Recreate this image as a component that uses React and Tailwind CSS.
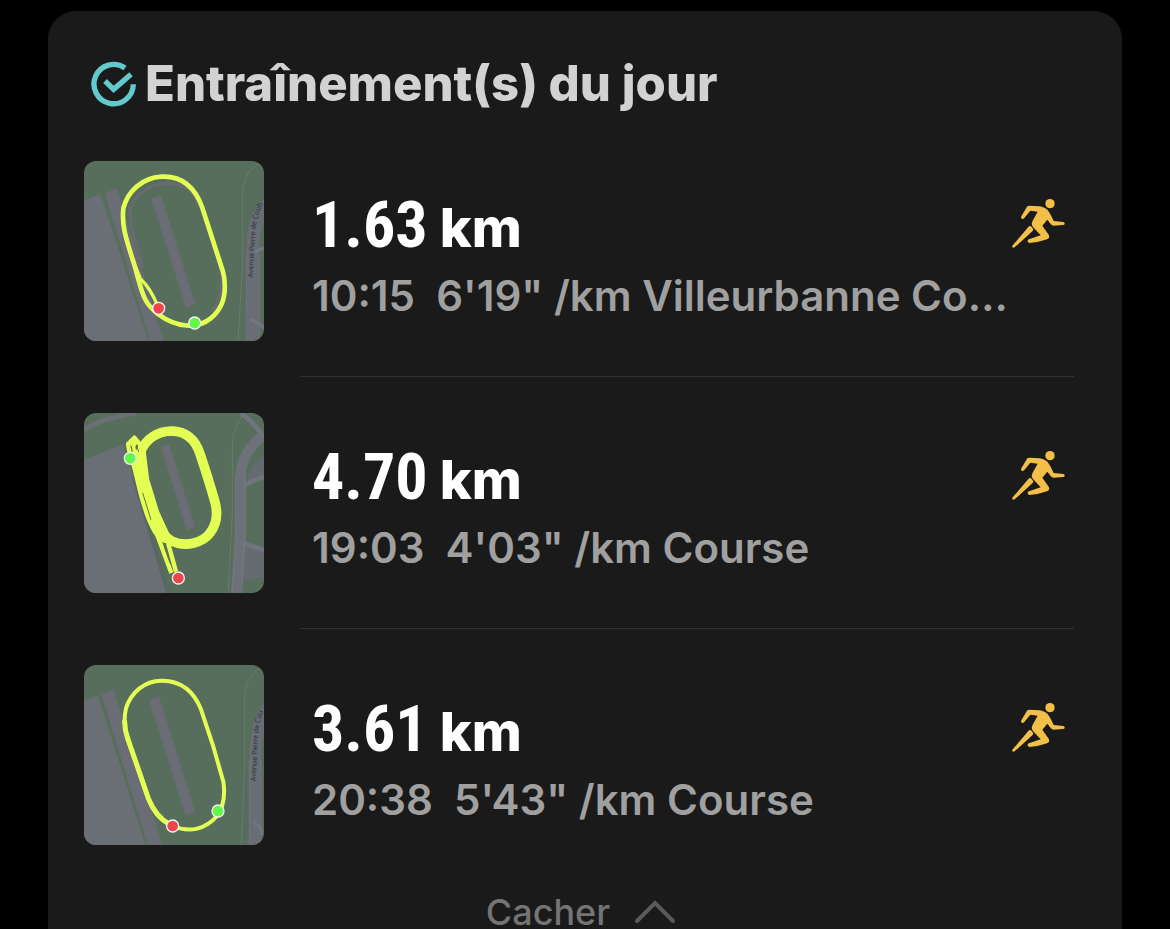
import React from "react";

function Marker({ x, y, color }) {
  return <circle cx={x} cy={y} r="18" fill={color} stroke="#f4f4f4" strokeWidth="4" />;
}

function StreetName({ id, d, children }) {
  return (
    <>
      <path id={id} d={d} fill="none" />
      <text fill="#2f3338" fontSize="21" fontFamily="Noto Sans, sans-serif">
        <textPath href={`#${id}`}>{children}</textPath>
      </text>
    </>
  );
}

function MapWarmup() {
  return (
    <svg viewBox="12 18 540 540" className="size-full" role="img" aria-label="Parcours 1.63 km">
      <rect x="12" y="18" width="540" height="540" fill="#586e5c" />
      <path d="M12 135 L62 118 L205 558 H12Z" fill="#696f74" />
      <path d="M74 113 L110 101 L252 558 H210Z" fill="#6a6d75" />
      <path d="M214 130 L243 121 L346 448 L318 458Z" fill="#6a6c76" />
      <path d="M152 160 C170 105 235 75 290 88 C335 98 360 145 370 180 L420 340 C430 380 425 430 395 470 M150 150 C145 185 155 230 190 340" fill="none" stroke="#666c70" strokeWidth="9" />
      <path d="M538 25 C505 45 488 75 488 120 V320 L474 558" fill="none" stroke="#819084" strokeWidth="2" strokeDasharray="5 3" />
      <path d="M566 145 C530 180 520 220 518 280 V558" fill="none" stroke="#696d76" strokeWidth="38" />
      <path d="M552 278 L520 292 M510 495 Q535 500 552 520" fill="none" stroke="#747780" strokeWidth="10" />
      <path d="M499 558 V300 M539 558 V300" fill="none" stroke="#777a82" strokeWidth="2" />
      <StreetName id="street-warmup" d="M518 368 L524 260 C526 215 530 180 560 120">Avenue Pierre de Coub</StreetName>
      <path d="M235 478 C290 518 352 523 392 490 C424 464 437 430 434 385 Q434 368 428 347 L367 158 C342 88 300 62 244 65 C188 68 143 108 130 160 C125 207 134 240 161 323 C188 415 187 440 235 478" fill="none" stroke="#e4ff54" strokeWidth="14" />
      <path d="M160 320 L181 371 C205 393 217 414 232 450" fill="none" stroke="#e4ff54" strokeWidth="10" />
      <Marker x={236} y={460} color="#ee444e" />
      <Marker x={344} y={504} color="#61f947" />
    </svg>
  );
}

function MapIntervals() {
  return (
    <svg viewBox="12 18 540 540" className="size-full" role="img" aria-label="Parcours 4.70 km">
      <rect x="12" y="18" width="540" height="540" fill="#586e5c" />
      <path d="M12 158 L128 112 L170 240 L268 558 H12Z" fill="#696f74" />
      <path d="M160 210 L264 558" stroke="#596760" strokeWidth="10" />
      <path d="M12 70 Q50 38 170 18" fill="none" stroke="#6b7074" strokeWidth="14" />
      <path d="M242 118 L267 110 L346 360 L320 370Z" fill="#6a6c76" />
      <path d="M552 145 Q510 180 495 235 L552 208Z M480 405 L552 430 V510 L476 524Z" fill="#666b72" />
      <path d="M552 85 C510 110 487 155 482 200 V400 L468 558" fill="none" stroke="#6d7179" strokeWidth="31" />
      <path d="M482 18 Q522 45 552 92 M490 235 L552 208 M482 405 L552 430" fill="none" stroke="#70747d" strokeWidth="14" />
      <path d="M495 205 V370 L485 558 M466 205 V390 L456 558" fill="none" stroke="#7a7d85" strokeWidth="2" />
      <path d="M492 20 Q456 65 457 120 V320 L444 558" fill="none" stroke="#819084" strokeWidth="2" strokeDasharray="5 3" />
      <path d="M182 135 C196 95 235 72 275 72 C318 73 345 95 360 140 C375 185 388 225 403 278 C415 318 412 350 390 378 C368 408 315 422 275 402 C242 384 228 345 212 305 L186 205 C180 180 176 160 182 135Z" fill="none" stroke="#e4ff54" strokeWidth="29" strokeLinejoin="round" />
      <path d="M182 140 L192 220 L222 318 L256 392" fill="none" stroke="#e4ff54" strokeWidth="32" strokeLinecap="round" strokeLinejoin="round" />
      <path d="M183 116 L163 92 L144 111 L149 140 L164 185 L182 260 C195 305 207 350 232 385 L274 498 M170 112 L157 106 L162 132 L174 175 M262 400 L288 494" fill="none" stroke="#e4ff54" strokeWidth="13" strokeLinejoin="round" />
      <path d="M188 258 L213 338 M253 420 L270 468 M153 116 L157 134 M170 115 L176 135" fill="none" stroke="#66733e" strokeWidth="3" />
      <Marker x={151} y={154} color="#61f947" />
      <Marker x={295} y={513} color="#ee444e" />
    </svg>
  );
}

function MapCooldown() {
  return (
    <svg viewBox="12 15 540 540" className="size-full" role="img" aria-label="Parcours 3.61 km">
      <rect x="12" y="15" width="540" height="540" fill="#586e5c" />
      <path d="M12 122 L54 107 L196 555 H12Z" fill="#696f74" />
      <path d="M64 104 L101 90 L247 555 H204Z" fill="#6a6d75" />
      <path d="M207 120 L237 109 L346 456 L317 467Z" fill="#6a6c76" />
      <path d="M535 28 C507 50 494 75 494 120 V320 L484 555" fill="none" stroke="#819084" strokeWidth="2" strokeDasharray="5 3" />
      <path d="M574 130 C538 175 528 225 526 290 V555" fill="none" stroke="#696d76" strokeWidth="36" />
      <path d="M508 555 V300 M543 555 V300" fill="none" stroke="#777a82" strokeWidth="2" />
      <path d="M522 490 Q548 498 545 525" fill="none" stroke="#747780" strokeWidth="8" />
      <StreetName id="street-cooldown" d="M527 364 L532 260 C534 215 536 180 560 130">Avenue Pierre de Cou</StreetName>
      <path d="M278 498 C330 520 377 507 411 468 C433 437 436 405 430 365 L400 260 L363 148 C340 90 300 63 248 62 C193 60 152 100 138 145 C130 180 134 209 143 235 L205 415 C222 462 244 482 278 498" fill="none" stroke="#e4ff54" strokeWidth="12" />
      <path d="M134 185 C134 202 137 218 143 235 L205 415 C220 452 238 475 267 492" fill="none" stroke="#e4ff54" strokeWidth="15" strokeLinecap="round" />
      <Marker x={278} y={498} color="#ee444e" />
      <Marker x={414} y={453} color="#61f947" />
    </svg>
  );
}

function CheckBadge() {
  return (
    <svg viewBox="33 33 138 138" className="size-[46px] shrink-0" fill="none" stroke="#62cacd" aria-hidden="true">
      <path d="M135 54 A59 59 0 1 0 160 103" strokeWidth="16" />
      <path d="M75 93 L101 118 L153 73" strokeWidth="16" />
    </svg>
  );
}

function RunnerIcon() {
  return (
    <svg viewBox="36 39 159 153" className="h-[51px] w-[53px] shrink-0" fill="#f2bf49" role="img" aria-label="Course à pied">
      <circle cx="150" cy="56" r="14" />
      <path d="M82 64 Q84 62 88 62 L119 64 Q139 67 147 81 Q154 92 161 108 L190 111 Q195 112 194 117 Q193 120 189 120 L160 122 Q155 121 152 117 L142 104 L127 122 L146 149 Q151 158 141 163 Q117 172 88 174 Q81 172 83 166 Q84 163 89 162 L122 151 L99 126 Q92 117 98 107 L113 80 L91 77 L73 99 Q69 103 65 101 Q62 98 64 94Z" />
      <path d="M87 124 Q91 121 95 126 L99 131 Q101 135 97 139 L44 187 Q39 190 37 186 Q36 184 38 181Z" />
    </svg>
  );
}

const workouts = [
  { distance: "1.63", time: "10:15", pace: "6'19\"", name: "Villeurbanne Course à pied", Map: MapWarmup },
  { distance: "4.70", time: "19:03", pace: "4'03\"", name: "Course", Map: MapIntervals },
  { distance: "3.61", time: "20:38", pace: "5'43\"", name: "Course", Map: MapCooldown },
];

function WorkoutRow({ workout, last }) {
  const { distance, time, pace, name, Map } = workout;
  return (
    <li className="flex gap-9">
      <div className="size-[180px] shrink-0 overflow-hidden rounded-xl">
        <Map />
      </div>
      <div className={`mr-12 flex h-[216px] min-w-0 grow border-b pl-3 ${last ? "border-transparent" : "border-[#303030]"}`}>
        <div className="min-w-0 grow pt-6">
          <p className="flex items-baseline gap-3 leading-[82px] text-white">
            <span className="font-['Roboto_Condensed','Roboto',sans-serif] text-[64px] font-bold">{distance}</span>
            <span className="text-[54px] font-extrabold">km</span>
          </p>
          <p className="truncate whitespace-pre text-[42px] font-semibold leading-[54px] text-[#a0a0a0]">
            {`${time}  ${pace} /km ${name}`}
          </p>
        </div>
        <div className="mr-[9px] pt-[37px]">
          <RunnerIcon />
        </div>
      </div>
    </li>
  );
}

export default function App() {
  return (
    <main className="flex min-h-screen flex-col bg-black px-12 pt-[11px] font-['Inter',sans-serif]">
      <section className="grow rounded-t-[28px] bg-[#1a1a1a] pt-10">
        <h1 className="flex items-center gap-2 pl-[43px] text-[49px] font-extrabold leading-[66px] text-[#d2d2d2]">
          <CheckBadge />
          Entraînement(s) du jour
        </h1>
        <ul className="mt-11 flex flex-col gap-9 pl-9">
          {workouts.map((workout, index) => (
            <WorkoutRow key={workout.distance} workout={workout} last={index === workouts.length - 1} />
          ))}
        </ul>
        <div className="flex justify-center pr-2 pt-[14px]">
          <button
            type="button"
            className="flex items-center gap-6 text-[36px] font-medium leading-[34px] text-[#747474]"
          >
            Cacher
            <svg viewBox="0 0 42 24" className="h-6 w-[42px]" fill="none" stroke="#5a5a5a" strokeWidth="4" strokeLinecap="round" aria-hidden="true">
              <path d="M3 21 L21 3 L39 21" />
            </svg>
          </button>
        </div>
      </section>
    </main>
  );
}
